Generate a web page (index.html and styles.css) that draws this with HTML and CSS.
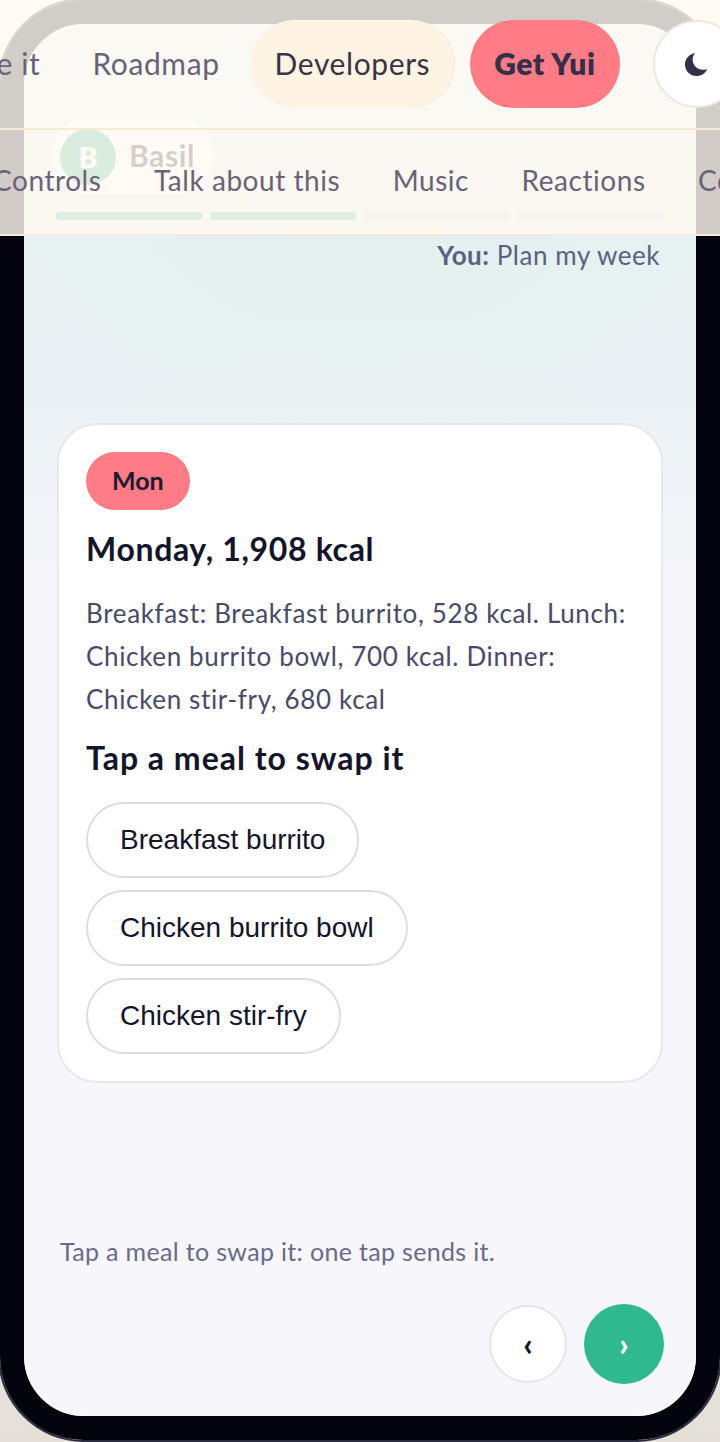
FILE: index.html
```html
<!DOCTYPE html>
<html lang="en">
<head>
    <meta charset="UTF-8">
    <meta name="viewport" content="width=device-width, initial-scale=1.0">
    <title>Yui</title>
    <link rel="stylesheet" href="styles.css">
</head>
<body>

    <!-- phone with the demo chat -->
    <div class="phone">
        <div class="screen">
            <div class="contact">
                <span class="avatar">B</span>
                <span class="contact-name">Basil</span>
            </div>
            <p class="you-line"><b>You:</b> Plan my week</p>

            <div class="card">
                <span class="day-pill">Mon</span>
                <h2 class="day-title">Monday, 1,908 kcal</h2>
                <p class="day-text">Breakfast: Breakfast burrito, 528 kcal. Lunch: Chicken burrito bowl, 700 kcal. Dinner: Chicken stir-fry, 680 kcal</p>
                <h3 class="swap-title">Tap a meal to swap it</h3>
                <div class="meals">
                    <button class="meal">Breakfast burrito</button>
                    <button class="meal">Chicken burrito bowl</button>
                    <button class="meal">Chicken stir-fry</button>
                </div>
            </div>

            <p class="hint">Tap a meal to swap it: one tap sends it.</p>

            <div class="pager">
                <button class="page-btn prev">‹</button>
                <button class="page-btn next">›</button>
            </div>
        </div>
    </div>

    <!-- fixed bars that lie over the phone -->
    <div class="bars">
        <nav class="site-nav">
            <a class="nav-link">Use it</a>
            <a class="nav-link">Roadmap</a>
            <a class="nav-link active">Developers</a>
            <a class="nav-link get">Get Yui</a>
            <button class="theme-btn">
                <svg width="25" height="25" viewBox="0 0 26 26"><path d="M11.5 1C5.6 2 1 6.9 1 13c0 6.700 5.400 12 12 12 5 0 9.400-3 11.200-7.400-1.300.6-2.800.9-4.400.9-6.200 0-10.800-4.800-10.800-10.700 0-2.500.9-4.900 2.500-6.800z" fill="#34304a"/></svg>
            </button>
        </nav>
        <div class="demo-tabs">
            <div class="tab-row">
                <a class="tab">Controls</a>
                <a class="tab">Talk about this</a>
                <a class="tab">Music</a>
                <a class="tab">Reactions</a>
                <a class="tab">Commands</a>
            </div>
            <div class="progress">
                <span class="step done"></span>
                <span class="step done"></span>
                <span class="step"></span>
                <span class="step"></span>
            </div>
        </div>
    </div>

</body>
</html>
```

FILE: styles.css
```css
* {
    box-sizing: border-box;
}

body {
    margin: 0;
    width: 720px;
    height: 1442px;
    overflow: hidden;
    position: relative;
    font-family: Lato, "Noto Sans", sans-serif;
    background: linear-gradient(180deg, #fff8ee 0%, #f4efe6 70%, #e4e0d8 100%);
}

/* phone */
.phone {
    width: 720px;
    height: 1440px;
    border: 24px solid #04040c;
    border-radius: 84px;
    box-shadow: 0 0 0 2px #2c2b40;
}

.screen {
    height: 1392px;
    border-radius: 60px;
    padding: 94px 33px 0;
    overflow: hidden;
    background:
        radial-gradient(ellipse 420px 240px at 340px 190px, rgba(222, 240, 232, 0.5), rgba(222, 240, 232, 0)),
        linear-gradient(180deg, #e6f1f3 0%, #e9f1f4 26%, #f6f6fb 40%, #f6f6fb 100%);
}

.contact {
    display: inline-flex;
    align-items: center;
    gap: 13px;
    height: 77px;
    margin-left: -7px;
    padding: 0 20px 0 10px;
    border-radius: 40px;
    background: #fff;
}

.avatar {
    width: 56px;
    height: 56px;
    border-radius: 50%;
    background: #2fb98c;
    color: #fff;
    font-size: 28px;
    font-weight: 800;
    display: flex;
    align-items: center;
    justify-content: center;
}

.contact-name {
    padding-bottom: 3px;
    font-size: 30px;
    font-weight: 700;
    letter-spacing: 0.6px;
    color: #14142b;
}

.you-line {
    margin: 42px 3px 0 0;
    text-align: right;
    font-size: 26px;
    line-height: 36px;
    letter-spacing: 0.55px;
    color: #5a6180;
}

/* card */
.card {
    margin-top: 150px;
    height: 660px;
    padding: 27px 27px 0;
    background: #fff;
    border: 2px solid #e6e8ee;
    border-radius: 40px;
}

.day-pill {
    display: inline-block;
    height: 58px;
    line-height: 56px;
    padding: 0 26px;
    border-radius: 29px;
    background: #ff7b86;
    color: #1c1a30;
    font-size: 25px;
    font-weight: 700;
}

.day-title {
    margin: 17px 0 0;
    font-size: 32px;
    line-height: 44px;
    font-weight: 700;
    letter-spacing: 0.65px;
    color: #14142b;
}

.day-text {
    margin: 21px 0 0;
    font-size: 26px;
    line-height: 43px;
    letter-spacing: 0.65px;
    color: #4a4a68;
}

.swap-title {
    margin: 15px 0 0;
    font-size: 32px;
    line-height: 44px;
    font-weight: 700;
    letter-spacing: 1px;
    color: #14142b;
}

.meals {
    display: flex;
    flex-direction: column;
    align-items: flex-start;
    gap: 12px;
    margin-top: 22px;
}

.meal {
    height: 76px;
    padding: 0 32px;
    background: #fff;
    border: 2px solid #dcdee7;
    border-radius: 38px;
    font-family: "Liberation Sans", Arial, sans-serif;
    font-size: 28px;
    color: #14142b;
}

.hint {
    margin: 151px 0 0 3px;
    font-size: 25px;
    line-height: 34px;
    letter-spacing: 0.33px;
    color: #6a6a8a;
}

.pager {
    display: flex;
    justify-content: flex-end;
    align-items: center;
    gap: 17px;
    margin: 36px -1px 0 0;
}

.page-btn {
    border-radius: 50%;
    font-family: Lato, sans-serif;
    font-size: 32px;
    font-weight: 900;
    line-height: 1;
    padding: 0;
}

.prev {
    width: 78px;
    height: 78px;
    background: #fff;
    border: 2px solid #e5e6ec;
    color: #14142b;
}

.next {
    width: 80px;
    height: 80px;
    background: #2fb98c;
    border: none;
    color: #fff;
}

/* bars over the phone */
.bars {
    position: absolute;
    top: 0;
    left: 0;
    width: 720px;
}

.site-nav {
    display: flex;
    align-items: center;
    height: 130px;
    background: rgba(255, 250, 243, 0.82);
    border-bottom: 2px solid #f8eadb;
    white-space: nowrap;
    overflow: hidden;
}

.nav-link {
    flex: none;
    height: 88px;
    line-height: 86px;
    padding: 0 24px;
    border-radius: 44px;
    font-size: 30px;
    letter-spacing: 0.6px;
    color: #6a6278;
}

.nav-link:first-child {
    margin-left: -63px;
    margin-right: 4px;
}

.active {
    margin-left: 7px;
    background: #fff3e4;
    color: #3a3446;
    box-shadow: 1px 0 0 #efe9de;
}

.get {
    margin-left: 16px;
    background: #ff7b86;
    color: #34304a;
    font-weight: 800;
}

.theme-btn {
    flex: none;
    width: 88px;
    height: 88px;
    margin-left: 33px;
    padding: 0;
    border: 2px solid #f0e8dc;
    border-radius: 50%;
    background: #fff;
    display: flex;
    align-items: center;
    justify-content: center;
}

.demo-tabs {
    height: 106px;
    background: rgba(255, 249, 241, 0.82);
    border-bottom: 2px solid #f8eadb;
    overflow: hidden;
}

.tab-row {
    display: flex;
    gap: 52.5px;
    height: 82px;
    align-items: flex-end;
    padding-bottom: 15px;
    margin-left: -7px;
    white-space: nowrap;
}

.tab {
    flex: none;
    font-size: 28px;
    letter-spacing: 0.55px;
    color: #6a6278;
}

.progress {
    display: flex;
    gap: 8px;
    padding: 0 56px;
}

.step {
    flex: 1;
    height: 8px;
    border-radius: 4px;
    background: #f6f4ee;
}

.done {
    background: #dfece2;
}
```
